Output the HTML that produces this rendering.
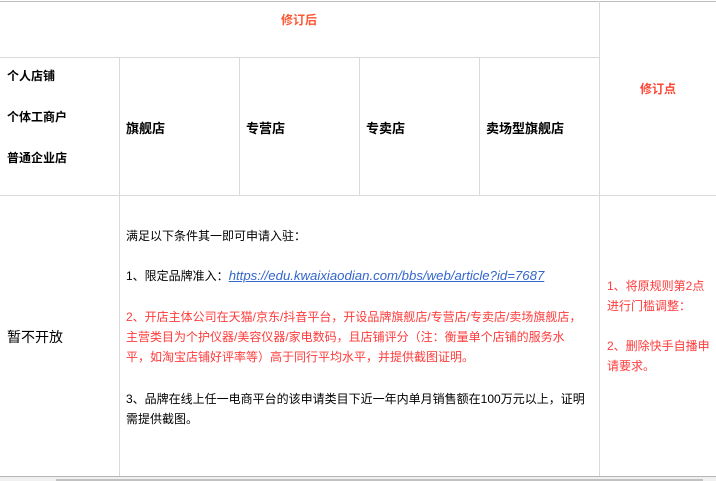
<!DOCTYPE html>
<html><head><meta charset="utf-8"><style>
body{margin:0;width:716px;height:481px;overflow:hidden;background:#fff;position:relative;font-family:"Liberation Sans","Noto Sans CJK SC",sans-serif;color:#000}
.a{position:absolute;white-space:nowrap}
.h{position:absolute;background:#d9d9d9;height:1px}
.v{position:absolute;background:#d9d9d9;width:1px}
.r{color:#ff3b3b}
.t{font-size:12px}
.b{font-weight:bold}
</style></head><body>
<div class="h" style="left:0;top:1px;width:716px;background:#bdbdbd"></div>
<div class="h" style="left:0;top:57px;width:599px"></div>
<div class="h" style="left:0;top:195px;width:716px"></div>
<div class="h" style="left:0;top:476px;width:716px;background:#b5b5b5"></div>
<div style="position:absolute;left:0;top:477px;width:716px;height:4px;background:#f0f0f0"></div>
<div style="position:absolute;left:56px;top:479px;width:647px;height:2px;background:#c1c1c1"></div>
<div class="v" style="left:119px;top:57px;height:419px"></div>
<div class="v" style="left:239px;top:57px;height:138px"></div>
<div class="v" style="left:359px;top:57px;height:138px"></div>
<div class="v" style="left:479px;top:57px;height:138px"></div>
<div class="v" style="left:599px;top:1px;height:475px"></div>

<div class="a t b" style="left:281px;top:11px;color:#ff5533">修订后</div>
<div class="a t b" style="left:640px;top:80px;color:#ff4433">修订点</div>

<div class="a t b" style="left:7px;top:67px">个人店铺</div>
<div class="a t b" style="left:7px;top:108px">个体工商户</div>
<div class="a t b" style="left:7px;top:149px">普通企业店</div>

<div class="a b" style="left:126px;top:118px;font-size:13px">旗舰店</div>
<div class="a b" style="left:246px;top:118px;font-size:13px">专营店</div>
<div class="a b" style="left:366px;top:118px;font-size:13px">专卖店</div>
<div class="a b" style="left:486px;top:118px;font-size:13px">卖场型旗舰店</div>

<div class="a" style="left:7px;top:327px;font-size:14px">暂不开放</div>

<div class="a t" style="left:126px;top:227px">满足以下条件其一即可申请入驻：</div>
<div class="a t" style="left:126px;top:267px">1、限定品牌准入：<span style="color:#3366cc;font-style:italic;text-decoration:underline;font-size:13.2px">https://edu.kwaixiaodian.com/bbs/web/article?id=7687</span></div>
<div class="a t r" style="left:126px;top:307px;line-height:20px">2、开店主体公司在天猫/京东/抖音平台，开设品牌旗舰店/专营店/专卖店/卖场旗舰店，<br>主营类目为个护仪器/美容仪器/家电数码，且店铺评分（注：衡量单个店铺的服务水<br>平，如淘宝店铺好评率等）高于同行平均水平，并提供截图证明。</div>
<div class="a t" style="left:126px;top:389px;line-height:20px">3、品牌在线上任一电商平台的该申请类目下近一年内单月销售额在100万元以上，证明<br>需提供截图。</div>

<div class="a t r" style="left:607px;top:276px;line-height:20px">1、将原规则第2点<br>进行门槛调整：<br><br>2、删除快手自播申<br>请要求。</div>
</body></html>
